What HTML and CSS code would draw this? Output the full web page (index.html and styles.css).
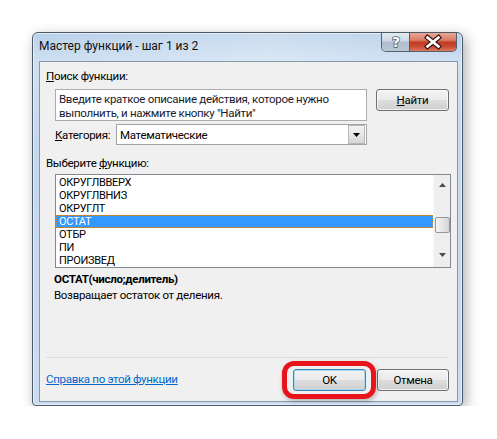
FILE: index.html
```html
<!DOCTYPE html>
<html lang="ru">
<head>
  <meta charset="UTF-8">
  <title>Мастер функций - шаг 1 из 2</title>
  <link rel="stylesheet" href="styles.css">
</head>
<body>
  <div class="window">
    <div class="titlebar">
      <span class="title">Мастер функций - шаг 1 из 2</span>
      <div class="caption-btns">
        <div class="cap-btn help-btn">
          <svg width="28" height="18" viewBox="0 0 28 18">
            <text x="14" y="14" text-anchor="middle" class="help-glyph">?</text>
          </svg>
        </div>
        <div class="cap-btn close-btn">
          <svg width="46" height="18" viewBox="0 0 46 18">
            <path d="M17.5 4.5 L28.5 13.5 M28.5 4.5 L17.5 13.5" class="x-outline"/>
            <path d="M17.5 4.5 L28.5 13.5 M28.5 4.5 L17.5 13.5" class="x-fill"/>
          </svg>
        </div>
      </div>
    </div>

    <div class="client">
      <div class="label"><u>П</u>оиск функции:</div>
      <div class="search-row">
        <div class="search-box">Введите краткое описание действия, которое нужно выполнить, и нажмите кнопку "Найти"</div>
        <button class="btn"><u>Н</u>айти</button>
      </div>

      <div class="category-row">
        <span class="category-label"><u>К</u>атегория:</span>
        <div class="select">
          <span class="select-value">Математические</span>
          <span class="select-arrow">
            <svg width="8" height="4" viewBox="0 0 8 4"><path d="M0 0 H7 L3.5 4 Z" fill="#000"/></svg>
          </span>
        </div>
      </div>

      <div class="label func-label">Выберите <u>ф</u>ункцию:</div>
      <div class="listbox">
        <ul class="items">
          <li>ОКРУГЛВВЕРХ</li>
          <li>ОКРУГЛВНИЗ</li>
          <li>ОКРУГЛТ</li>
          <li class="selected">ОСТАТ</li>
          <li>ОТБР</li>
          <li>ПИ</li>
          <li>ПРОИЗВЕД</li>
        </ul>
        <div class="scrollbar">
          <svg class="arrow-up" width="7" height="4" viewBox="0 0 7 4"><path d="M3.5 0 L7 4 H0 Z" fill="#4d4d4d"/></svg>
          <div class="thumb"></div>
          <svg class="arrow-down" width="7" height="4" viewBox="0 0 7 4"><path d="M0 0 H7 L3.5 4 Z" fill="#4d4d4d"/></svg>
        </div>
      </div>

      <div class="signature">ОСТАТ(число;делитель)</div>
      <div class="description">Возвращает остаток от деления.</div>

      <div class="separator"></div>

      <div class="bottom-row">
        <a href="#" class="help-link">Справка по этой функции</a>
        <div class="actions">
          <div class="ok-wrap">
            <button class="btn btn-default">OK</button>
            <div class="highlight"></div>
          </div>
          <button class="btn">Отмена</button>
        </div>
      </div>
    </div>
  </div>
</body>
</html>
```

FILE: styles.css
```css
* {
  margin: 0;
  padding: 0;
  box-sizing: border-box;
}
body {
  background: #fff;
  font-family: Roboto, 'Noto Sans', sans-serif;
  font-size: 11.5px;
  letter-spacing: -0.3px;
  color: #000;
  padding: 32px 0 0 32px;
}
.window {
  width: 431px;
  height: 374px;
  border: 1px solid #4b5866;
  border-radius: 6px 6px 4px 4px;
  background: linear-gradient(180deg, #b9d1ea 0%, #cfe0f2 8%, #c4d8ee 30%, #c9dcf0 100%);
  padding: 0 4px 3px 6px;
  box-shadow: 3px 4px 14px rgba(0, 0, 0, 0.32), inset 0 0 0 1px rgba(255, 255, 255, 0.55);
  display: flex;
  flex-direction: column;
}
.titlebar {
  height: 28px;
  display: flex;
  justify-content: space-between;
  align-items: flex-start;
  background: linear-gradient(90deg, rgba(255,255,255,0) 0%, rgba(255,255,255,0.25) 55%, rgba(255,255,255,0) 100%);
}
.title {
  padding-top: 6px;
  font-size: 12px;
  letter-spacing: 0;
  color: #111;
}
.caption-btns {
  display: flex;
  margin-right: 1px;
  border: 1px solid #56606c;
  border-top: none;
  border-radius: 0 0 5px 5px;
  overflow: hidden;
  height: 19px;
}
.cap-btn {
  height: 18px;
}
.help-btn {
  width: 28px;
  border-right: 1px solid #56606c;
  background: linear-gradient(180deg, #e3ebf3 0%, #cbd7e3 45%, #aebccb 50%, #bac8d6 100%);
}
.close-btn {
  width: 46px;
  background: linear-gradient(180deg, #e9a897 0%, #d97a64 40%, #c13b23 52%, #c84a32 75%, #dd7b5f 100%);
}
.help-glyph {
  font-family: 'DejaVu Sans', sans-serif;
  font-weight: bold;
  font-size: 14px;
  fill: #fff;
  stroke: #4a5560;
  stroke-width: 1.4;
  paint-order: stroke;
}
.x-outline {
  stroke: #3e1a14;
  stroke-width: 5;
  stroke-linecap: square;
  fill: none;
}
.x-fill {
  stroke: #fff;
  stroke-width: 2.6;
  stroke-linecap: square;
  fill: none;
}
.client {
  flex: 1;
  background: #f0f0f0;
  border: 1px solid #8796a8;
  padding: 7px 8px 0 6px;
}
.label {
  line-height: 15px;
  height: 15px;
}
.search-row {
  display: flex;
  align-items: flex-start;
  gap: 9px;
  margin-top: 5px;
  padding-left: 9px;
}
.search-box {
  width: 312px;
  height: 32px;
  background: #fff;
  border: 1px solid #a9abaf;
  padding: 3px 3px 0 3px;
  line-height: 13.5px;
  color: #1a1a2e;
}
.btn {
  width: 73px;
  height: 22px;
  font-family: inherit;
  font-size: 11.5px;
  letter-spacing: -0.3px;
  color: #000;
  border: 1px solid #707070;
  border-radius: 3px;
  background: linear-gradient(180deg, #f2f2f2 0%, #ebebeb 48%, #dddddd 52%, #cfcfcf 100%);
  box-shadow: inset 0 0 0 1px rgba(255, 255, 255, 0.7);
}
.category-row {
  display: flex;
  align-items: center;
  margin-top: 3px;
  padding-left: 9px;
}
.category-label {
  width: 61px;
}
.select {
  width: 251px;
  height: 21px;
  background: #fff;
  border: 1px solid #a0a3a8;
  display: flex;
  align-items: center;
  justify-content: space-between;
  padding-left: 3px;
}
.select-arrow {
  width: 17px;
  height: 19px;
  margin-right: 1px;
  border: 1px solid #b8b8b8;
  background: linear-gradient(180deg, #f3f3f3 0%, #e6e6e6 50%, #d6d6d6 100%);
  display: flex;
  align-items: center;
  justify-content: center;
}
.func-label {
  margin-top: 11px;
}
.listbox {
  margin-top: 3px;
  margin-left: 9px;
  width: 396px;
  height: 94px;
  border: 1px solid #828790;
  background: #fff;
  display: flex;
  justify-content: space-between;
}
.items {
  list-style: none;
  width: 377px;
  padding-top: 1px;
}
.items li {
  height: 13px;
  line-height: 13px;
  font-size: 11px;
  padding-left: 3px;
}
.items li.selected {
  background: #3399ff;
  color: #fff;
  outline: 1px dotted #c98a3a;
  outline-offset: -1px;
}
.scrollbar {
  width: 17px;
  background: #eeeeee;
  border-left: 1px solid #f6f6f6;
  display: flex;
  flex-direction: column;
  align-items: center;
  padding-top: 8px;
}
.thumb {
  width: 15px;
  height: 16px;
  margin-top: 30px;
  border: 1px solid #979797;
  border-radius: 2px;
  background: linear-gradient(90deg, #f4f4f4 0%, #e3e3e3 55%, #d4d4d4 100%);
}
.arrow-down {
  margin-top: 20px;
}
.signature {
  margin-top: 4px;
  padding-left: 8px;
  font-weight: bold;
  line-height: 15px;
}
.description {
  margin-top: 1px;
  padding-left: 8px;
  line-height: 15px;
}
.separator {
  margin-top: 54px;
  height: 1px;
  background: #d5dfe5;
}
.bottom-row {
  display: flex;
  justify-content: space-between;
  align-items: center;
  margin-top: 11px;
}
.help-link {
  color: #0066cc;
  text-decoration: underline;
  margin-top: -3px;
}
.actions {
  display: flex;
  gap: 11px;
}
.actions > .btn {
  width: 72px;
}
.ok-wrap {
  position: relative;
}
.btn-default {
  border-color: #3c7fb1;
  box-shadow: inset 0 0 0 1px #a6dcf6;
}
.highlight {
  position: absolute;
  left: -11px;
  top: -8px;
  right: -10px;
  bottom: -8px;
  border: 5px solid #e8141c;
  border-radius: 12px;
  box-shadow: 1px 2px 4px rgba(0, 0, 0, 0.25);
}
```
